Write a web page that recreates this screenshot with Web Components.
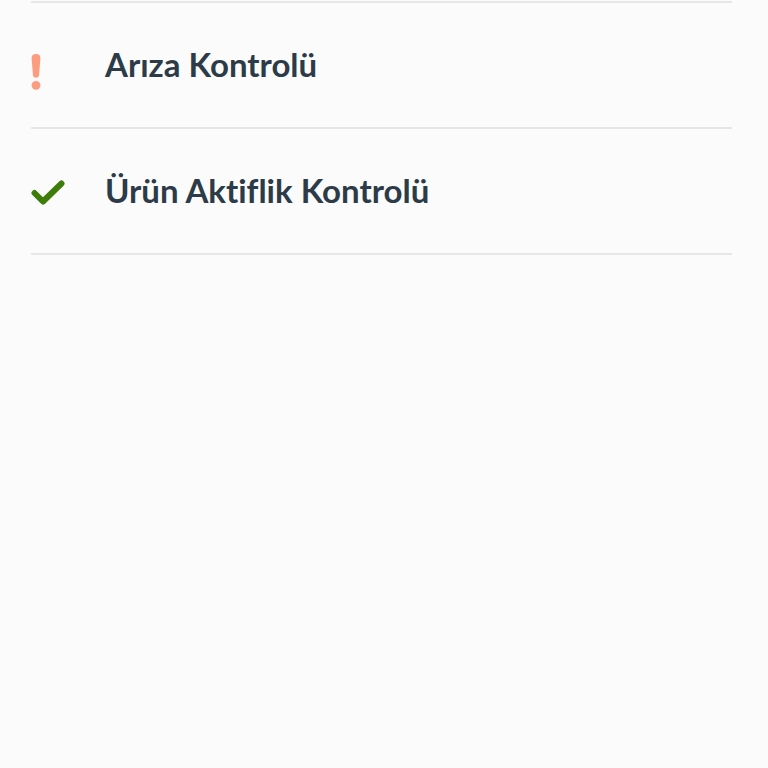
<!DOCTYPE html>
<html lang="tr">
<head>
  <meta charset="utf-8">
  <meta name="viewport" content="width=device-width, initial-scale=1">
  <title>Kontroller</title>
  <style>
    body {
      margin: 0;
      background: #fbfbfb;
      color: #2d3b48;
      font-family: Lato, "Open Sans", sans-serif;
    }
  </style>
</head>
<body>
  <check-list>
    <check-item status="warning">Arıza Kontrolü</check-item>
    <check-item status="ok">Ürün Aktiflik Kontrolü</check-item>
  </check-list>

  <script>
    /**
     * <status-icon> - Icon for the result of a check
     *
     * Usage:
     * <status-icon name="ok"></status-icon>
     */
    const ICONS = {
      warning: `
        <svg width="10" height="36" viewBox="0 0 10 36" aria-hidden="true">
          <path fill="#fc9d80" d="M5 0C8.2 0 9.6 1.8 9.4 4.6L8 21.4Q7.7 23.7 5 23.7T2 21.4L.6 4.6C.4 1.8 1.8 0 5 0Z"/>
          <circle cx="5" cy="31.3" r="4.4" fill="#fc9d80"/>
        </svg>`,
      ok: `
        <svg width="34" height="26" viewBox="0 0 34 26" aria-hidden="true">
          <path fill="none" stroke="#3f7d0b" stroke-width="6" stroke-linecap="round" stroke-linejoin="round" d="M3.5 13 12 21.5 30.5 3.5"/>
        </svg>`
    };

    class StatusIcon extends HTMLElement {
      constructor() {
        super();
        this.attachShadow({ mode: 'open' });
      }

      connectedCallback() {
        this.shadowRoot.innerHTML = `
          <style>
            :host {
              display: block;
            }

            svg {
              display: block;
            }
          </style>
          ${ICONS[this.getAttribute('name')] || ''}
        `;
      }
    }

    /**
     * <check-item> - One row: status icon and label
     */
    class CheckItem extends HTMLElement {
      constructor() {
        super();
        this.attachShadow({ mode: 'open' });
      }

      connectedCallback() {
        this.shadowRoot.innerHTML = `
          <style>
            :host {
              display: grid;
              grid-template-columns: 34px 1fr;
              column-gap: 40px;
              align-items: start;
              box-sizing: border-box;
              min-height: 126px;
              padding: 41px 0 36px;
              border-bottom: 2px solid #e6e6e6;
            }

            status-icon {
              margin-top: 10px;
            }

            .label {
              font-size: 33px;
              font-weight: 700;
              line-height: 40px;
              font-variant-ligatures: none;
            }
          </style>

          <status-icon name="${this.getAttribute('status')}"></status-icon>
          <span class="label"><slot></slot></span>
        `;
        this.setAttribute('role', 'listitem');
      }
    }

    /**
     * <check-list> - Stack of check items under a top rule
     */
    class CheckList extends HTMLElement {
      constructor() {
        super();
        this.attachShadow({ mode: 'open' });
        this.shadowRoot.innerHTML = `
          <style>
            :host {
              display: block;
              margin: 0 36px 0 31px;
              padding-top: 1px;
            }

            .rows {
              border-top: 2px solid #e6e6e6;
            }
          </style>
          <div class="rows" role="list"><slot></slot></div>
        `;
      }
    }

    customElements.define('status-icon', StatusIcon);
    customElements.define('check-item', CheckItem);
    customElements.define('check-list', CheckList);
  </script>
</body>
</html>
